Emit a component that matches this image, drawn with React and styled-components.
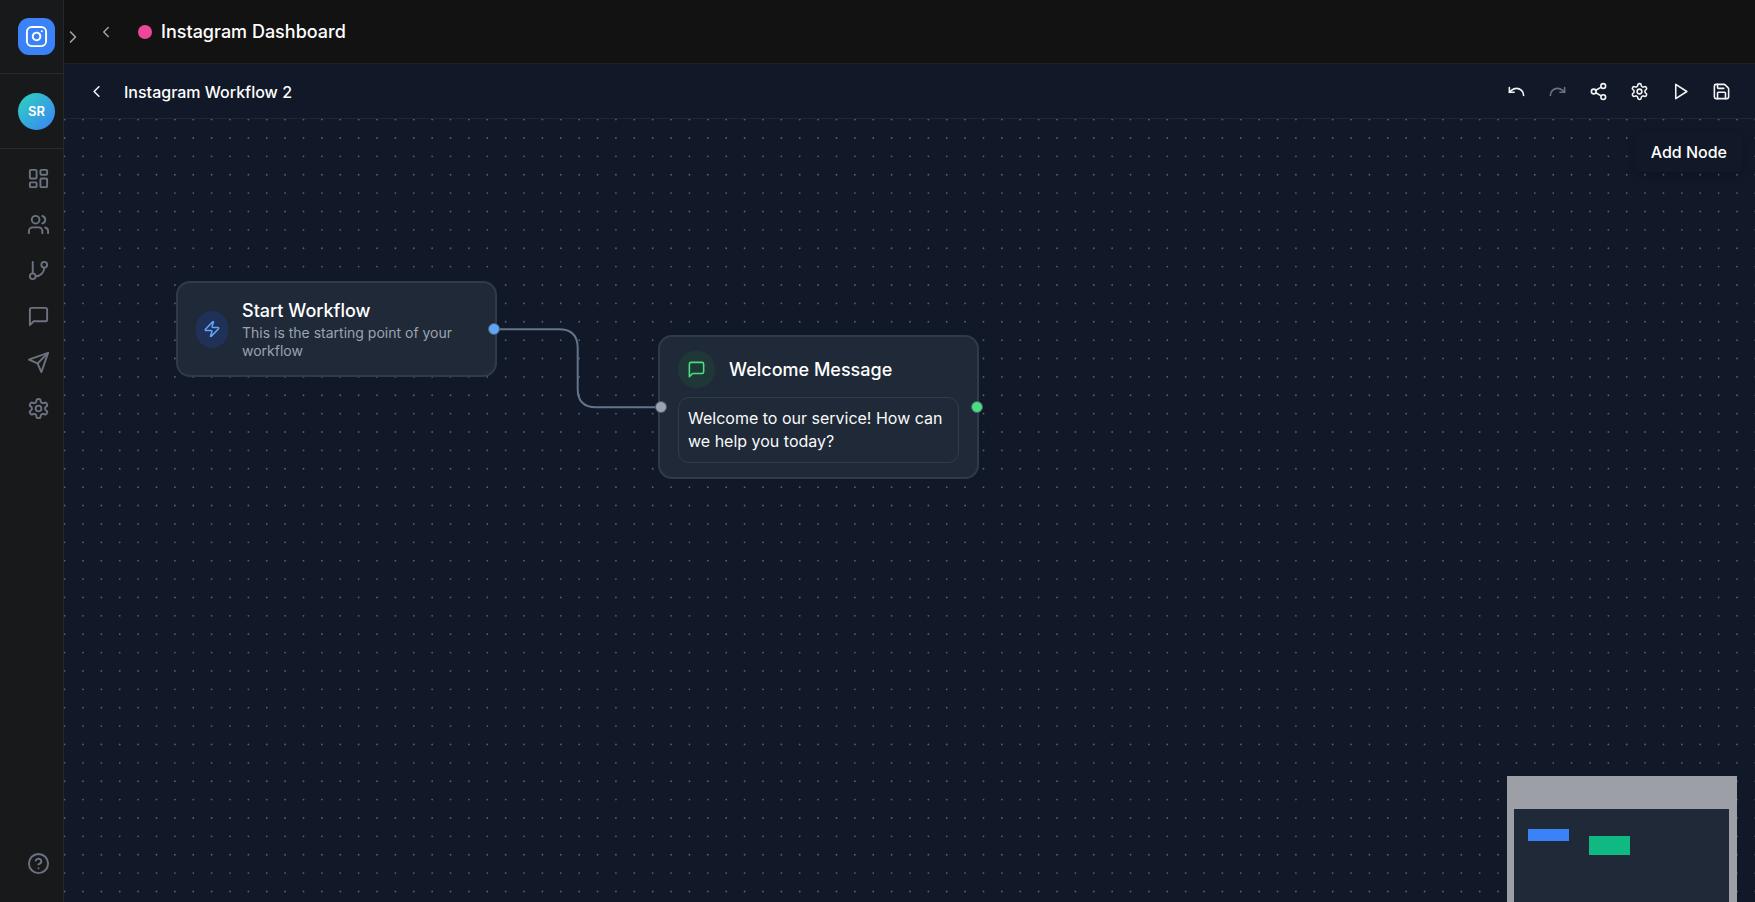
import React from "react";
import styled, { createGlobalStyle } from "styled-components";

const GlobalStyle = createGlobalStyle`
  *, *::before, *::after { box-sizing: border-box; }
  html, body { margin: 0; height: 100%; }
  #root { height: 100%; }
  body {
    font-family: Inter, "Liberation Sans", sans-serif;
    background: #111827;
    color: #fff;
  }
  button, textarea { font: inherit; }
  h1, h2, h3, p { margin: 0; }
`;

const shapes = {
  dashboard: (
    <>
      <rect width="7" height="9" x="3" y="3" rx="1" />
      <rect width="7" height="5" x="14" y="3" rx="1" />
      <rect width="7" height="9" x="14" y="12" rx="1" />
      <rect width="7" height="5" x="3" y="16" rx="1" />
    </>
  ),
  users: (
    <>
      <path d="M16 21v-2a4 4 0 0 0-4-4H6a4 4 0 0 0-4 4v2" />
      <circle cx="9" cy="7" r="4" />
      <path d="M22 21v-2a4 4 0 0 0-3-3.87" />
      <path d="M16 3.13a4 4 0 0 1 0 7.75" />
    </>
  ),
  branch: (
    <>
      <path d="M6 3v12" />
      <circle cx="18" cy="6" r="3" />
      <circle cx="6" cy="18" r="3" />
      <path d="M18 9a9 9 0 0 1-9 9" />
    </>
  ),
  message: <path d="M21 15a2 2 0 0 1-2 2H7l-4 4V5a2 2 0 0 1 2-2h14a2 2 0 0 1 2 2z" />,
  send: (
    <>
      <path d="m22 2-7 20-4-9-9-4Z" />
      <path d="M22 2 11 13" />
    </>
  ),
  settings: (
    <>
      <path d="M12.22 2h-.44a2 2 0 0 0-2 2v.18a2 2 0 0 1-1 1.73l-.43.25a2 2 0 0 1-2 0l-.15-.08a2 2 0 0 0-2.73.73l-.22.38a2 2 0 0 0 .73 2.73l.15.1a2 2 0 0 1 1 1.72v.51a2 2 0 0 1-1 1.74l-.15.09a2 2 0 0 0-.73 2.73l.22.38a2 2 0 0 0 2.73.73l.15-.08a2 2 0 0 1 2 0l.43.25a2 2 0 0 1 1 1.73V20a2 2 0 0 0 2 2h.44a2 2 0 0 0 2-2v-.18a2 2 0 0 1 1-1.73l.43-.25a2 2 0 0 1 2 0l.15.08a2 2 0 0 0 2.73-.73l.22-.39a2 2 0 0 0-.73-2.73l-.15-.08a2 2 0 0 1-1-1.74v-.5a2 2 0 0 1 1-1.74l.15-.09a2 2 0 0 0 .73-2.73l-.22-.38a2 2 0 0 0-2.73-.73l-.15.08a2 2 0 0 1-2 0l-.43-.25a2 2 0 0 1-1-1.73V4a2 2 0 0 0-2-2z" />
      <circle cx="12" cy="12" r="3" />
    </>
  ),
  help: (
    <>
      <circle cx="12" cy="12" r="10" />
      <path d="M9.09 9a3 3 0 0 1 5.83 1c0 2-3 3-3 3" />
      <path d="M12 17h.01" />
    </>
  ),
  instagram: (
    <>
      <rect width="20" height="20" x="2" y="2" rx="5" />
      <path d="M16 11.37A4 4 0 1 1 12.63 8 4 4 0 0 1 16 11.37z" />
      <path d="M17.5 6.5h.01" />
    </>
  ),
  left: <path d="m15 18-6-6 6-6" />,
  right: <path d="m9 18 6-6-6-6" />,
  undo: (
    <>
      <path d="M3 7v6h6" />
      <path d="M21 17a9 9 0 0 0-9-9 9 9 0 0 0-6 2.3L3 13" />
    </>
  ),
  redo: (
    <>
      <path d="M21 7v6h-6" />
      <path d="M3 17a9 9 0 0 1 9-9 9 9 0 0 1 6 2.3l3 2.7" />
    </>
  ),
  share: (
    <>
      <circle cx="18" cy="5" r="3" />
      <circle cx="6" cy="12" r="3" />
      <circle cx="18" cy="19" r="3" />
      <path d="m8.59 13.51 6.83 3.98M15.41 6.51l-6.82 3.98" />
    </>
  ),
  play: <path d="m6 3 14 9-14 9V3z" />,
  save: (
    <>
      <path d="M15.2 3a2 2 0 0 1 1.4.6l3.8 3.8a2 2 0 0 1 .6 1.4V19a2 2 0 0 1-2 2H5a2 2 0 0 1-2-2V5a2 2 0 0 1 2-2z" />
      <path d="M17 21v-7a1 1 0 0 0-1-1H8a1 1 0 0 0-1 1v7" />
      <path d="M7 3v4a1 1 0 0 0 1 1h7" />
    </>
  ),
  zap: (
    <path d="M4 14a1 1 0 0 1-.78-1.63l9.9-10.2a.5.5 0 0 1 .86.46l-1.92 6.02A1 1 0 0 0 13 10h7a1 1 0 0 1 .78 1.63l-9.9 10.2a.5.5 0 0 1-.86-.46l1.92-6.02A1 1 0 0 0 11 14z" />
  ),
};

function Icon({ name, size = 18 }) {
  return (
    <svg
      width={size}
      height={size}
      viewBox="0 0 24 24"
      fill="none"
      stroke="currentColor"
      strokeWidth="2"
      strokeLinecap="round"
      strokeLinejoin="round"
      aria-hidden="true"
    >
      {shapes[name]}
    </svg>
  );
}

const Shell = styled.div`
  display: flex;
  height: 100vh;
  overflow: hidden;
`;

const Sidebar = styled.aside`
  position: relative;
  display: flex;
  flex-direction: column;
  flex: none;
  width: 64px;
  background: #18191a;
  border-right: 1px solid #26282b;
`;

const SidebarBlock = styled.div`
  display: flex;
  align-items: center;
  padding: 18px;
  height: ${(p) => p.$height}px;
  border-bottom: 1px solid #27292c;
`;

const Logo = styled.a`
  display: grid;
  place-items: center;
  flex: none;
  width: 37px;
  height: 37px;
  border-radius: 11px;
  background: #3b82f6;
  color: #fff;
`;

const Avatar = styled.div`
  display: grid;
  place-items: center;
  flex: none;
  width: 37px;
  height: 37px;
  border-radius: 50%;
  background: linear-gradient(135deg, #2dd4bf, #3b82f6);
  font-size: 13px;
  font-weight: 600;
`;

const Nav = styled.nav`
  display: flex;
  flex-direction: column;
  gap: 10px;
  padding: 11px 0 0 20px;
`;

const NavLink = styled.a`
  display: grid;
  place-items: center;
  width: 37px;
  height: 36px;
  color: #6b7280;
`;

const SidebarFoot = styled.div`
  margin-top: auto;
  padding: 0 0 21px 20px;
`;

const Expand = styled.button`
  position: absolute;
  left: 63px;
  top: 27px;
  display: grid;
  place-items: center;
  width: 20px;
  height: 20px;
  padding: 0;
  border: 0;
  background: none;
  color: #a1a1aa;
  z-index: 2;
`;

const Main = styled.main`
  display: flex;
  flex-direction: column;
  flex: 1;
  min-width: 0;
`;

const TopBar = styled.header`
  display: flex;
  align-items: center;
  flex: none;
  height: 64px;
  padding: 1px 0 0 32px;
  background: #121212;
  border-bottom: 1px solid #1d2126;
`;

const ChannelDot = styled.span`
  width: 14px;
  height: 14px;
  margin: 0 9px 0 22px;
  border-radius: 50%;
  background: #ec4899;
`;

const Title = styled.h1`
  font-size: 18px;
  line-height: 24px;
  font-weight: 500;
`;

const ToolBar = styled.div`
  display: flex;
  align-items: center;
  flex: none;
  height: 55px;
  padding: 1px 15px 0 14px;
  background: #111827;
  border-bottom: 1px solid #1f2633;
`;

const FlowName = styled.h2`
  margin-left: 9px;
  font-size: 16px;
  line-height: 24px;
  font-weight: 500;
`;

const Tools = styled.div`
  display: flex;
  gap: 4px;
  margin-left: auto;
`;

const IconButton = styled.button`
  display: grid;
  place-items: center;
  width: ${(p) => p.$width || 37}px;
  height: 37px;
  padding: 0;
  border: 0;
  border-radius: 8px;
  background: none;
  color: ${(p) => (p.$muted ? "#9ca3af" : "#f3f4f6")};

  &:disabled { color: #6b7280; }
`;

const Canvas = styled.section`
  position: relative;
  flex: 1;
  min-height: 0;
  overflow: hidden;
  background: #111827;
`;

const Layer = styled.svg`
  position: absolute;
  inset: 0;
  width: 100%;
  height: 100%;
`;

const AddNode = styled.button`
  position: absolute;
  top: 13px;
  right: 12px;
  height: 40px;
  padding: 0 16px;
  border: 0;
  border-radius: 8px;
  background: #111827;
  color: #fff;
  font-size: 16px;
  font-weight: 500;
  box-shadow: 0 4px 10px rgba(0, 0, 0, 0.2);
`;

const NodeCard = styled.article`
  position: absolute;
  left: ${(p) => p.$x}px;
  top: ${(p) => p.$y}px;
  width: 321px;
  padding: ${(p) => p.$pad};
  background: #1f2937;
  border: 2px solid #303b49;
  border-radius: 14px;
`;

const NodeHead = styled.div`
  display: flex;
  align-items: center;
  gap: 14px;
`;

const Badge = styled.span`
  display: grid;
  place-items: center;
  flex: none;
  width: ${(p) => p.$width}px;
  height: 37px;
  border-radius: 18px;
  background: ${(p) => p.$bg};
  color: ${(p) => p.$fg};
`;

const NodeTitle = styled.h3`
  font-size: 18px;
  line-height: 26px;
  font-weight: 500;
`;

const NodeText = styled.p`
  font-size: 14px;
  line-height: 18px;
  color: #9ca3af;
`;

const Bubble = styled.p`
  margin-top: 9px;
  padding: 9px;
  border: 1px solid #323d4c;
  border-radius: 11px;
  font-size: 16px;
  line-height: 23px;
  color: #f9fafb;
`;

const Port = styled.span`
  position: absolute;
  left: ${(p) => p.$x}px;
  top: ${(p) => p.$y}px;
  width: 12px;
  height: 12px;
  border: 1px solid #4b5b70;
  border-radius: 50%;
  background: ${(p) => p.$bg};
`;

const MiniMap = styled.div`
  position: absolute;
  right: 18px;
  top: 657px;
  width: 230px;
  height: 168px;
  padding: 33px 8px 0 7px;
  background: #9c9fa6;
`;

const MiniView = styled.div`
  position: relative;
  height: 126px;
  background: #1f2937;
`;

const MiniNode = styled.span`
  position: absolute;
  left: ${(p) => p.$x}px;
  top: ${(p) => p.$y}px;
  width: 41px;
  height: ${(p) => p.$h}px;
  background: ${(p) => p.$bg};
`;

const navItems = [
  ["dashboard", "Dashboard"],
  ["users", "Contacts"],
  ["branch", "Workflows"],
  ["message", "Messages"],
  ["send", "Broadcasts"],
  ["settings", "Settings"],
];

const tools = [
  ["undo", "Undo"],
  ["redo", "Redo"],
  ["share", "Share"],
  ["settings", "Workflow settings"],
  ["play", "Run"],
  ["save", "Save"],
];

// Dot grid: one dotted line per row, 20 units apart at the canvas zoom.
const ZOOM = 0.9189;
const gridRows = Array.from({ length: 120 }, (_, row) => row * 20);

function DotGrid() {
  return (
    <Layer aria-hidden="true">
      <g
        transform={`translate(0.6 0.6) scale(${ZOOM})`}
        stroke="#566070"
        strokeWidth="2"
        strokeLinecap="round"
        strokeDasharray="0 20"
      >
        {gridRows.map((y) => (
          <path key={y} d={`M0 ${y}H4200`} />
        ))}
      </g>
    </Layer>
  );
}

export default function App() {
  return (
    <Shell>
      <GlobalStyle />
      <Sidebar>
        <SidebarBlock $height={74}>
          <Logo href="#home" aria-label="Home">
            <Icon name="instagram" size={23} />
          </Logo>
        </SidebarBlock>
        <SidebarBlock $height={75}>
          <Avatar>SR</Avatar>
        </SidebarBlock>
        <Nav>
          {navItems.map(([icon, label]) => (
            <NavLink key={icon} href={`#${icon}`} aria-label={label}>
              <Icon name={icon} size={23} />
            </NavLink>
          ))}
        </Nav>
        <SidebarFoot>
          <NavLink href="#help" aria-label="Help">
            <Icon name="help" size={23} />
          </NavLink>
        </SidebarFoot>
        <Expand type="button" aria-label="Expand sidebar">
          <Icon name="right" size={20} />
        </Expand>
      </Sidebar>

      <Main>
        <TopBar>
          <IconButton type="button" $width={20} $muted aria-label="Back">
            <Icon name="left" size={18} />
          </IconButton>
          <ChannelDot />
          <Title>Instagram Dashboard</Title>
        </TopBar>

        <ToolBar>
          <IconButton type="button" aria-label="Back to workflows">
            <Icon name="left" size={19} />
          </IconButton>
          <FlowName>Instagram Workflow 2</FlowName>
          <Tools>
            {tools.map(([icon, label]) => (
              <IconButton key={icon} type="button" aria-label={label} disabled={icon === "redo"}>
                <Icon name={icon} size={19} />
              </IconButton>
            ))}
          </Tools>
        </ToolBar>

        <Canvas>
          <DotGrid />

          <NodeCard $x={112} $y={162} $pad="15px 18px">
            <NodeHead>
              <Badge $width={32} $bg="#1f3157" $fg="#60a5fa">
                <Icon name="zap" size={18} />
              </Badge>
              <div>
                <NodeTitle>Start Workflow</NodeTitle>
                <NodeText>This is the starting point of your workflow</NodeText>
              </div>
            </NodeHead>
          </NodeCard>

          <NodeCard $x={594} $y={216} $pad="14px 18px">
            <NodeHead>
              <Badge $width={37} $bg="#1f3737" $fg="#4ade80">
                <Icon name="message" size={19} />
              </Badge>
              <NodeTitle>Welcome Message</NodeTitle>
            </NodeHead>
            <Bubble>Welcome to our service! How can we help you today?</Bubble>
          </NodeCard>

          <Layer aria-hidden="true" pointerEvents="none">
            <path
              d="M431 210.300H495Q513.700 210.300 513.700 229V270Q513.700 288.300 532 288.300H597"
              fill="none"
              stroke="#64748b"
              strokeWidth="2"
            />
          </Layer>

          <Port $x={424} $y={204} $bg="#60a5fa" />
          <Port $x={591} $y={282} $bg="#9ca3af" />
          <Port $x={907} $y={282} $bg="#4ade80" />

          <AddNode type="button">Add Node</AddNode>

          <MiniMap>
            <MiniView>
              <MiniNode $x={14} $y={20} $h={12} $bg="#3b82f6" />
              <MiniNode $x={75} $y={27} $h={19} $bg="#10b981" />
            </MiniView>
          </MiniMap>
        </Canvas>
      </Main>
    </Shell>
  );
}
